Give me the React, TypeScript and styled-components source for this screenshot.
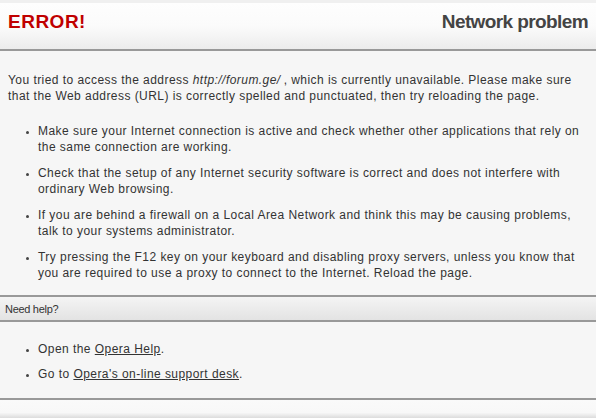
import React from "react";
import styled, { createGlobalStyle } from "styled-components";

const Global = createGlobalStyle`
  html, body { margin: 0; padding: 0; background: #f6f6f6; }
  body { font-family: "Liberation Sans", Arial, sans-serif; color: #333; }
`;

const Page = styled.div`
  width: 596px;
  height: 418px;
  display: flex;
  flex-direction: column;
  background: #f6f6f6;
  overflow: hidden;
`;

const Header = styled.header`
  height: 51px;
  flex: none;
  display: flex;
  align-items: flex-start;
  justify-content: space-between;
  padding: 8px 8px 0;
  border-top: 3px solid #f0f0f0;
  border-bottom: 2px solid #999;
  box-sizing: border-box;
  background: linear-gradient(#fefefe, #fbfbfb 50%, #ececec);
`;

const Title = styled.h1<{ $tone: "error" | "plain" }>`
  margin: 0;
  font-size: 19px;
  line-height: 22px;
  font-weight: bold;
  color: ${(p) => (p.$tone === "error" ? "#c00000" : "#444")};
  letter-spacing: ${(p) => (p.$tone === "error" ? "0.5px" : "-0.6px")};
`;

const Content = styled.main`
  padding: 21px 8px 0;
  font-size: 12px;
  line-height: 16px;
  color: #333;
  display: flex;
  flex-direction: column;
`;

const Para = styled.p`
  margin: 0;
  letter-spacing: 0.45px;
`;

const Address = styled.i`
  display: inline-block;
  margin-right: 3px;
`;

const List = styled.ul<{ $gap: number; $top: number }>`
  margin: ${(p) => p.$top}px 0 0;
  padding: 0 0 0 30px;
  list-style: disc;
  display: flex;
  flex-direction: column;
  gap: ${(p) => p.$gap}px;
  letter-spacing: 0.45px;
  li::marker { font-size: 9px; color: #444; }
`;

const Item = styled.li``;

const HelpBar = styled.div`
  margin-top: 14px;
  height: 27px;
  flex: none;
  box-sizing: border-box;
  border-top: 2px solid #999;
  border-bottom: 2px solid #999;
  background: linear-gradient(#f4f4f4, #e3e3e3);
  display: flex;
  align-items: center;
  padding: 0 5px;
  font-size: 11px;
  color: #333;
  letter-spacing: -0.3px;
`;

const HelpList = styled.div`
  padding: 19px 8px 16px;
  font-size: 12px;
  line-height: 16px;
  border-bottom: 2px solid #999;
  flex: none;
`;

const Link = styled.a`
  color: #333;
  text-decoration: underline;
`;

const Footer = styled.div`
  flex: 1;
  background: linear-gradient(#fafafa, #f8f8f8 70%, #dcdcdc);
`;

export default function App() {
  return (
    <>
      <Global />
      <Page>
        <Header>
          <Title $tone="error">ERROR!</Title>
          <Title $tone="plain">Network problem</Title>
        </Header>
        <Content>
          <Para>
            You tried to access the address <Address>http://forum.ge/</Address>, which is currently unavailable. Please
            make sure that the Web address (URL) is correctly spelled and punctuated, then try reloading the page.
          </Para>
          <List $gap={10} $top={19}>
            <Item>
              Make sure your Internet connection is active and check whether other applications that rely on the
              same connection are working.
            </Item>
            <Item>
              Check that the setup of any Internet security software is correct and does not interfere with ordinary
              Web browsing.
            </Item>
            <Item>
              If you are behind a firewall on a Local Area Network and think this may be causing problems, talk to
              your systems administrator.
            </Item>
            <Item>
              Try pressing the F12 key on your keyboard and disabling proxy servers, unless you know that you are
              required to use a proxy to connect to the Internet. Reload the page.
            </Item>
          </List>
        </Content>
        <HelpBar>Need help?</HelpBar>
        <HelpList>
          <List $gap={9} $top={0}>
            <Item>
              Open the <Link href="#">Opera Help</Link>.
            </Item>
            <Item>
              Go to <Link href="#">Opera's on-line support desk</Link>.
            </Item>
          </List>
        </HelpList>
        <Footer />
      </Page>
    </>
  );
}
